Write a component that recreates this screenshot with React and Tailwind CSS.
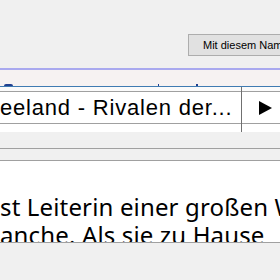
export default function App() {
  return (
    <div className="w-[280px] h-[280px] overflow-hidden bg-[#f0f0f0] flex flex-col">
      <div className="h-[68px] shrink-0 pt-[34px] pl-[188px]">
        <div className="h-[22px] w-[130px] border border-[#adadad] bg-[#e1e1e1] pl-[14px] text-[11px] leading-[20px] text-black whitespace-nowrap overflow-hidden" style={{ fontFamily: '"Liberation Sans", Arial, sans-serif' }}>
          Mit diesem Namen
        </div>
      </div>
      <div className="h-[2px] shrink-0 bg-[#a9a9ef]" />
      <div className="h-[16px] shrink-0 bg-[#f6f2f2] relative">
        <div className="absolute left-[4px] bottom-0 w-[9px] h-[2px] rounded-t-full bg-[#1f3f8f]" />
        <div className="absolute left-[158px] bottom-0 w-[1px] h-[2px] bg-[#1f3f8f]" />
        <div className="absolute left-[196px] bottom-0 w-[2px] h-[2px] bg-[#1f3f8f]" />
      </div>
      <div className="h-px shrink-0 bg-[#3f7bb2]" />
      <div className="h-[45px] shrink-0 flex bg-white">
        <div className="w-[241px] flex flex-col">
          <div className="h-[4px] bg-[#fafafa]" />
          <div className="h-px bg-[#a0a0a0]" />
          <div className="h-[31px] flex items-center overflow-hidden whitespace-nowrap text-[22px] tracking-[0.8px] text-black" style={{ fontFamily: '"Liberation Sans", Arial, sans-serif' }}>
            eeland - Rivalen der...
          </div>
          <div className="h-px bg-[#a0a0a0]" />
          <div className="flex-1 bg-white" />
        </div>
        <div className="w-px bg-[#707070]" />
        <div className="flex-1 flex flex-col">
          <div className="h-[4px] bg-[#fafafa]" />
          <div className="h-px bg-[#a0a0a0]" />
          <div className="h-[31px] flex items-center pl-[17px]">
            <svg width="13" height="14" viewBox="0 0 13 14"><polygon points="0,0 13,7 0,14" fill="#000" /></svg>
          </div>
          <div className="h-px bg-[#a0a0a0]" />
          <div className="flex-1 bg-white" />
        </div>
      </div>
      <div className="h-[16px] shrink-0 bg-[#f0f0f0]" />
      <div className="h-px shrink-0 bg-[#a0a0a0]" />
      <div className="h-[11px] shrink-0 bg-[#f0f0f0]" />
      <div className="h-px shrink-0 bg-[#a0a0a0]" />
      <div className="h-[81px] shrink-0 bg-white overflow-hidden pt-[32px] text-[24px] tracking-[0.15px] leading-[28px] text-black whitespace-nowrap" style={{ fontFamily: '"Noto Sans", sans-serif' }}>
        <div>st Leiterin einer großen W</div>
        <div>anche. Als sie zu Hause</div>
      </div>
      <div className="h-px shrink-0 bg-[#a0a0a0]" />
      <div className="flex-1 bg-[#f0f0f0]" />
    </div>
  );
}
